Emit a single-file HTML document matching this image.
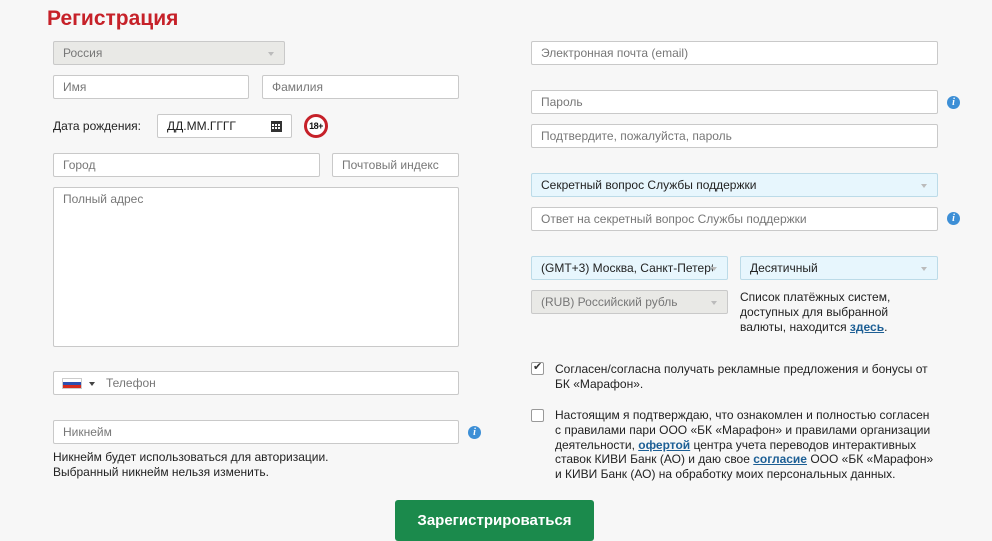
<!DOCTYPE html>
<html><head><meta charset="utf-8"><style>
*{box-sizing:border-box;margin:0;padding:0}
body{width:992px;height:541px;background:#f7f7f7;font-family:"Liberation Sans",Arial,sans-serif;position:relative;overflow:hidden;color:#222}
.a{position:absolute}
.in{position:absolute;height:24px;border:1px solid #c9c9c9;border-radius:2px;background:#fff;font-size:12px;color:#777;padding-left:9px;line-height:22px;white-space:nowrap;overflow:hidden}
.sel{background:#e7f6fd;border-color:#bcdbe8;color:#222}
.dis{background:#e9e9e6;color:#777}
.car{position:absolute;right:10px;top:10px;border:3px solid transparent;border-top:4px solid #bbb;border-bottom:0}
.info{position:absolute;width:13px;height:13px;border-radius:50%;background:#3d8fd6;color:#fff;font:italic bold 10px/13px "Liberation Serif",serif;text-align:center}
.t{position:absolute;font-size:12px;line-height:14.8px;color:#222}
a{color:#1d5f95;font-weight:bold;text-decoration:underline}
.cb{position:absolute;width:13px;height:13px;border:1px solid #999;border-radius:2px;background:#fff}
</style></head><body>
<div class="a" style="left:47px;top:7px;font-size:21px;font-weight:bold;color:#c62129">Регистрация</div>

<div class="in dis" style="left:53px;top:41px;width:232px;height:24px">Россия<span class="car"></span></div>
<div class="in" style="left:53px;top:75px;width:196px">Имя</div>
<div class="in" style="left:262px;top:75px;width:197px">Фамилия</div>
<div class="t" style="left:53px;top:119px">Дата рождения:</div>
<div class="in" style="left:157px;top:114px;width:135px;color:#222">ДД.ММ.ГГГГ
<svg class="a" style="left:113px;top:5px" width="11" height="12" viewBox="0 0 11 12"><rect x="0" y="1" width="11" height="11" fill="#333"/><g fill="#fff"><rect x="1" y="4" width="2" height="2"/><rect x="4" y="4" width="2" height="2"/><rect x="7" y="4" width="2" height="2"/><rect x="1" y="7" width="2" height="2"/><rect x="4" y="7" width="2" height="2"/><rect x="7" y="7" width="2" height="2"/></g></svg></div>
<div class="a" style="left:304px;top:114px;width:24px;height:24px;border:3px solid #c62129;border-radius:50%;background:#fff;font-size:9px;font-weight:bold;text-align:center;line-height:18px;color:#111;letter-spacing:-0.5px">18+</div>
<div class="in" style="left:53px;top:153px;width:267px">Город</div>
<div class="in" style="left:332px;top:153px;width:127px">Почтовый индекс</div>
<div class="in" style="left:53px;top:187px;width:406px;height:160px;line-height:22px">Полный адрес</div>
<div class="in" style="left:53px;top:371px;width:406px;padding-left:52px">Телефон
<div class="a" style="left:8px;top:6px;width:20px;height:11px;border:1px solid #ccc"><div style="height:3px;background:#fff"></div><div style="height:3px;background:#2b4fb0"></div><div style="height:3px;background:#d52b1e"></div></div>
<span class="a" style="left:35px;top:10px;border:3px solid transparent;border-top:4px solid #444;border-bottom:0"></span></div>
<div class="in" style="left:53px;top:420px;width:406px">Никнейм</div>
<div class="info" style="left:468px;top:426px">i</div>
<div class="t" style="left:53px;top:450px">Никнейм будет использоваться для авторизации.<br>Выбранный никнейм нельзя изменить.</div>
<div class="a" style="left:395px;top:500px;width:199px;height:41px;background:#1b8a4c;border-radius:3px;color:#fff;font-size:15px;font-weight:bold;text-align:center;line-height:41px">Зарегистрироваться</div>

<div class="in" style="left:531px;top:41px;width:407px">Электронная почта (email)</div>
<div class="in" style="left:531px;top:90px;width:407px">Пароль</div>
<div class="info" style="left:947px;top:96px">i</div>
<div class="in" style="left:531px;top:124px;width:407px">Подтвердите, пожалуйста, пароль</div>
<div class="in sel" style="left:531px;top:173px;width:407px">Секретный вопрос Службы поддержки<span class="car"></span></div>
<div class="in" style="left:531px;top:207px;width:407px">Ответ на секретный вопрос Службы поддержки</div>
<div class="info" style="left:947px;top:212px">i</div>
<div class="in sel" style="left:531px;top:256px;width:197px;padding:0"><span class="a" style="left:9px;top:0;width:172px;overflow:hidden">(GMT+3) Москва, Санкт-Петербург</span><span class="car"></span></div>
<div class="in sel" style="left:740px;top:256px;width:198px">Десятичный<span class="car"></span></div>
<div class="in dis" style="left:531px;top:290px;width:197px">(RUB) Российский рубль<span class="car"></span></div>
<div class="t" style="left:740px;top:290px">Список платёжных систем,<br>доступных для выбранной<br>валюты, находится <a>здесь</a>.</div>
<div class="cb" style="left:531px;top:362px"><span class="a" style="left:1px;top:-3px;font-size:11px;color:#333">✔</span></div>
<div class="t" style="left:555px;top:362px">Согласен/согласна получать рекламные предложения и бонусы от<br>БК «Марафон».</div>
<div class="cb" style="left:531px;top:409px"></div>
<div class="t" style="left:555px;top:408px">Настоящим я подтверждаю, что ознакомлен и полностью согласен<br>с правилами пари ООО «БК «Марафон» и правилами организации<br>деятельности, <a>офертой</a> центра учета переводов интерактивных<br>ставок КИВИ Банк (АО) и даю свое <a>согласие</a> ООО «БК «Марафон»<br>и КИВИ Банк (АО) на обработку моих персональных данных.</div>
</body></html>
